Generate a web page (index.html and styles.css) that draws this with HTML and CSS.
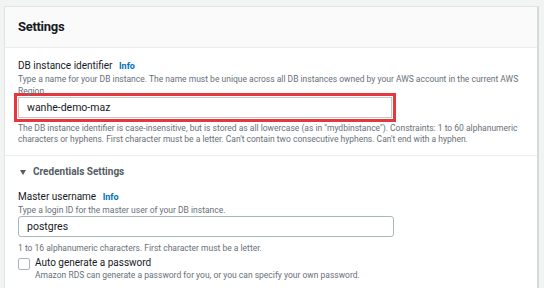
FILE: index.html
```html
<!DOCTYPE html>
<html lang="en">
<head>
  <meta charset="UTF-8">
  <title>Settings</title>
  <link rel="stylesheet" href="styles.css">
</head>
<body>
  <div class="panel">
    <div class="panel-head">
      <h2>Settings</h2>
    </div>
    <div class="panel-body">
      <div class="field">
        <div class="label">DB instance identifier <a class="info">Info</a></div>
        <div class="desc">Type a name for your DB instance. The name must be unique across all DB instances owned by your AWS account in the current AWS Region.</div>
        <div class="highlight">
          <input type="text" class="input" value="wanhe-demo-maz">
        </div>
        <div class="hint">The DB instance identifier is case-insensitive, but is stored as all lowercase (as in "mydbinstance"). Constraints: 1 to 60 alphanumeric characters or hyphens. First character must be a letter. Can't contain two consecutive hyphens. Can't end with a hyphen.</div>
      </div>
    </div>
    <div class="panel-body section">
      <div class="section-title"><span class="caret"></span>Credentials Settings</div>
      <div class="field">
        <div class="label">Master username <a class="info">Info</a></div>
        <div class="desc">Type a login ID for the master user of your DB instance.</div>
        <input type="text" class="input" value="postgres">
        <div class="hint">1 to 16 alphanumeric characters. First character must be a letter.</div>
      </div>
      <label class="check">
        <span class="box"></span>
        <span>
          <span class="check-label">Auto generate a password</span>
          <span class="desc">Amazon RDS can generate a password for you, or you can specify your own password.</span>
        </span>
      </label>
    </div>
  </div>
</body>
</html>
```

FILE: styles.css
```css
*{
  margin: 0;
  padding: 0;
  box-sizing: border-box;
}
body{
  background: #f2f3f3;
  font-family: Roboto, "Open Sans", sans-serif;
  color: #16191f;
  padding: 6px 5px 0 4px;
  height: 288px;
  overflow: hidden;
}
.panel{
  background: #fff;
  border: 1px solid #e1e4e4;
  border-right: 2px solid #d5dbdb;
  height: 300px;
}
.panel-head{
  background: #fafafa;
  border-bottom: 1px solid #eaeded;
  height: 41px;
  padding: 11px 13px 0;
}
.panel-head h2{
  font-size: 13px;
  font-weight: 700;
  letter-spacing: -0.3px;
  line-height: 18px;
}
.panel-body{
  padding: 11px 8px 0 13px;
}
.label{
  font-size: 10px;
  line-height: 13px;
}
.info{
  color: #0073bb;
  font-weight: 700;
  font-size: 9px;
  margin-left: 4px;
}
.desc{
  display: block;
  font-size: 8.5px;
  line-height: 12px;
  color: #687078;
}
.highlight{
  border: 3px solid #e8363d;
  margin: -4px 0 0 -4px;
  width: 382px;
  padding: 1px;
}
.input{
  display: block;
  width: 376px;
  height: 21px;
  border: 1px solid #aab7b8;
  border-radius: 3px;
  padding: 0 8px;
  font-family: inherit;
  font-size: 10.5px;
  color: #16191f;
  outline: 0;
}
.highlight .input{
  border-color: #c3c8c8;
  border-radius: 0;
  width: 100%;
}
.hint{
  font-size: 8.5px;
  line-height: 11px;
  color: #687078;
  margin-top: 1px;
  padding-bottom: 10px;
}
.section{
  border-top: 1px solid #eaeded;
  padding-top: 9px;
}
.section-title{
  font-size: 10px;
  font-weight: 700;
  line-height: 14px;
  color: #545b64;
  display: flex;
  align-items: center;
  margin-bottom: 11px;
}
.caret{
  width: 0;
  height: 0;
  border-left: 3.5px solid transparent;
  border-right: 3.5px solid transparent;
  border-top: 5px solid #545b64;
  margin: 0 7px 0 2px;
}
.section .hint{
  margin-top: 6px;
  padding-bottom: 2px;
}
.check{
  display: flex;
  align-items: flex-start;
}
.box{
  width: 12px;
  height: 12px;
  border: 1px solid #aab7b8;
  border-radius: 2px;
  margin: 2px 5px 0 0;
  flex: none;
}
.check-label{
  display: block;
  font-size: 10px;
  line-height: 14px;
}
.check .desc{
  line-height: 10px;
}
```
